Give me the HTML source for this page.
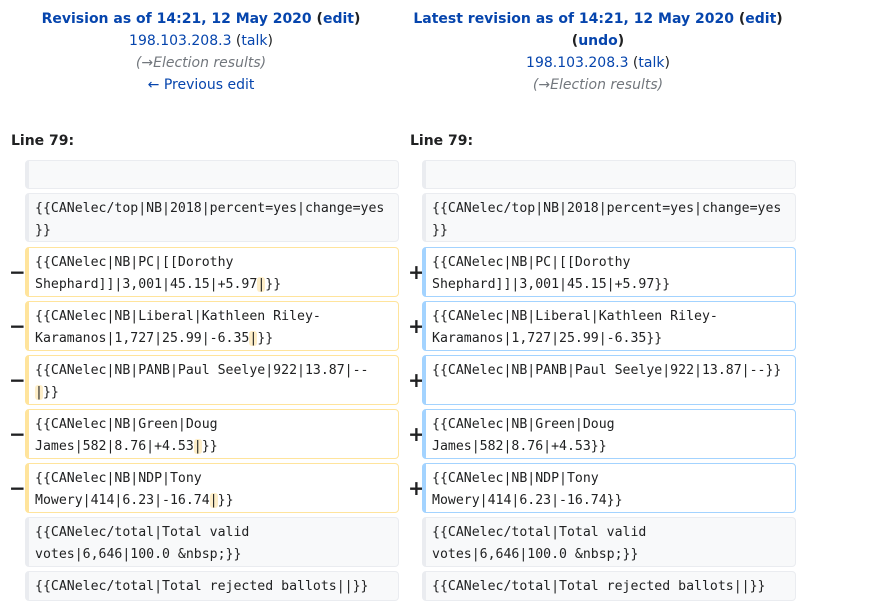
<!DOCTYPE html>
<html><head><meta charset="utf-8"><style>
body{margin:0;width:874px;height:605px;background:#fff;position:relative;overflow:hidden;font-family:"DejaVu Sans","Liberation Sans",sans-serif;font-size:14px;color:#202122}
a{color:#0645ad;text-decoration:none}
.hd{position:absolute;text-align:center;line-height:22px}
.hd b{font-weight:bold}
.c{color:#72777d;font-style:italic}
.ln{position:absolute;top:130px;font-weight:bold;line-height:22px}
.box{position:absolute;box-sizing:border-box;border:1px solid #eaecf0;border-left-width:4px;border-radius:4px;background:#f8f9fa;font-family:"DejaVu Sans Mono","Liberation Mono",monospace;font-size:13.2px;line-height:22px;padding:4px 0 0 6px;white-space:pre}
.del{background:#fff;border-color:#ffe49c}
.add{background:#fff;border-color:#a3d3ff}
.L{left:25px;width:374px}
.R{left:422px;width:374px}
.m{position:absolute;font-weight:bold;font-size:20px;line-height:20px}
.x{background:#feeec8;border-radius:3px}
</style></head><body>
<div class="hd" style="left:0;width:402px;top:8px"><b><a>Revision as of 14:21, 12 May 2020</a> (<a>edit</a>)</b><br><a>198.103.208.3</a> (<a>talk</a>)<br><span class="c">(→Election results)</span><br><a>← Previous edit</a></div>
<div class="hd" style="left:398px;width:400px;top:8px"><b><a>Latest revision as of 14:21, 12 May 2020</a> (<a>edit</a>)<br>(<a>undo</a>)</b><br><a>198.103.208.3</a> (<a>talk</a>)<br><span class="c">(→Election results)</span></div>
<div class="ln" style="left:11px">Line 79:</div>
<div class="ln" style="left:410px">Line 79:</div>

<div class="box L" style="top:160px;height:29px"></div>
<div class="box R" style="top:160px;height:29px"></div>
<div class="box L" style="top:193px;height:49px">{{CANelec/top|NB|2018|percent=yes|change=yes
}}</div>
<div class="box R" style="top:193px;height:49px">{{CANelec/top|NB|2018|percent=yes|change=yes
}}</div>

<div class="m" style="left:9px;top:262px">−</div><div class="m" style="left:408px;top:262px">+</div>
<div class="box L del" style="top:247px;height:50px">{{CANelec|NB|PC|[[Dorothy
Shephard]]|3,001|45.15|+5.97<span class="x">|</span>}}</div>
<div class="box R add" style="top:247px;height:50px">{{CANelec|NB|PC|[[Dorothy
Shephard]]|3,001|45.15|+5.97}}</div>

<div class="m" style="left:9px;top:316px">−</div><div class="m" style="left:408px;top:316px">+</div>
<div class="box L del" style="top:301px;height:50px">{{CANelec|NB|Liberal|Kathleen Riley-
Karamanos|1,727|25.99|-6.35<span class="x">|</span>}}</div>
<div class="box R add" style="top:301px;height:50px">{{CANelec|NB|Liberal|Kathleen Riley-
Karamanos|1,727|25.99|-6.35}}</div>

<div class="m" style="left:9px;top:370px">−</div><div class="m" style="left:408px;top:370px">+</div>
<div class="box L del" style="top:355px;height:50px">{{CANelec|NB|PANB|Paul Seelye|922|13.87|--
<span class="x">|</span>}}</div>
<div class="box R add" style="top:355px;height:50px">{{CANelec|NB|PANB|Paul Seelye|922|13.87|--}}</div>

<div class="m" style="left:9px;top:424px">−</div><div class="m" style="left:408px;top:424px">+</div>
<div class="box L del" style="top:409px;height:50px">{{CANelec|NB|Green|Doug
James|582|8.76|+4.53<span class="x">|</span>}}</div>
<div class="box R add" style="top:409px;height:50px">{{CANelec|NB|Green|Doug
James|582|8.76|+4.53}}</div>

<div class="m" style="left:9px;top:478px">−</div><div class="m" style="left:408px;top:478px">+</div>
<div class="box L del" style="top:463px;height:50px">{{CANelec|NB|NDP|Tony
Mowery|414|6.23|-16.74<span class="x">|</span>}}</div>
<div class="box R add" style="top:463px;height:50px">{{CANelec|NB|NDP|Tony
Mowery|414|6.23|-16.74}}</div>

<div class="box L" style="top:517px;height:50px">{{CANelec/total|Total valid
votes|6,646|100.0 &amp;nbsp;}}</div>
<div class="box R" style="top:517px;height:50px">{{CANelec/total|Total valid
votes|6,646|100.0 &amp;nbsp;}}</div>
<div class="box L" style="top:571px;height:30px">{{CANelec/total|Total rejected ballots||}}</div>
<div class="box R" style="top:571px;height:30px">{{CANelec/total|Total rejected ballots||}}</div>
</body></html>
